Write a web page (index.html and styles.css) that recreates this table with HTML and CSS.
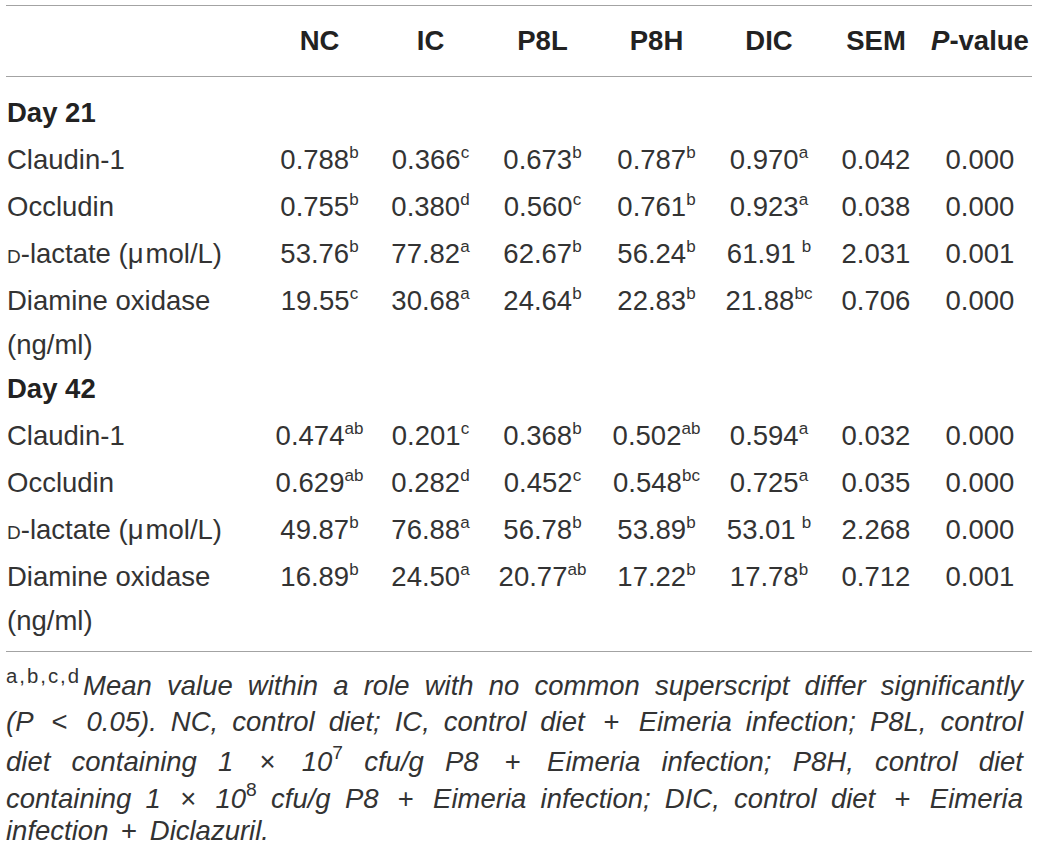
FILE: index.html
```html
<!DOCTYPE html>
<html lang="en">
<head>
    <meta charset="UTF-8">
    <meta name="viewport" content="width=device-width, initial-scale=1.0">
    <title>Intestinal barrier markers</title>
    <link rel="stylesheet" href="styles.css">
</head>
<body>
    <div class="table-wrap">
        <table class="data-table">
            <colgroup>
                <col class="col-label">
                <col class="col-nc">
                <col class="col-ic">
                <col class="col-p8l">
                <col class="col-p8h">
                <col class="col-dic">
                <col class="col-sem">
                <col class="col-p">
            </colgroup>
            <thead>
                <tr>
                    <th></th>
                    <th>NC</th>
                    <th>IC</th>
                    <th>P8L</th>
                    <th>P8H</th>
                    <th>DIC</th>
                    <th>SEM</th>
                    <th><i>P</i>-value</th>
                </tr>
            </thead>
            <tbody>
                <!-- Day 21 -->
                <tr class="group-row">
                    <td colspan="8">Day 21</td>
                </tr>
                <tr>
                    <td>Claudin-1</td>
                    <td>0.788<sup>b</sup></td>
                    <td>0.366<sup>c</sup></td>
                    <td>0.673<sup>b</sup></td>
                    <td>0.787<sup>b</sup></td>
                    <td>0.970<sup>a</sup></td>
                    <td>0.042</td>
                    <td>0.000</td>
                </tr>
                <tr>
                    <td>Occludin</td>
                    <td>0.755<sup>b</sup></td>
                    <td>0.380<sup>d</sup></td>
                    <td>0.560<sup>c</sup></td>
                    <td>0.761<sup>b</sup></td>
                    <td>0.923<sup>a</sup></td>
                    <td>0.038</td>
                    <td>0.000</td>
                </tr>
                <tr>
                    <td><span class="sc">d</span>-lactate (<span class="mu">μ</span>mol/L)</td>
                    <td>53.76<sup>b</sup></td>
                    <td>77.82<sup>a</sup></td>
                    <td>62.67<sup>b</sup></td>
                    <td>56.24<sup>b</sup></td>
                    <td>61.91<sup class="gap">b</sup></td>
                    <td>2.031</td>
                    <td>0.001</td>
                </tr>
                <tr>
                    <td>Diamine oxidase (ng/ml)</td>
                    <td>19.55<sup>c</sup></td>
                    <td>30.68<sup>a</sup></td>
                    <td>24.64<sup>b</sup></td>
                    <td>22.83<sup>b</sup></td>
                    <td>21.88<sup>bc</sup></td>
                    <td>0.706</td>
                    <td>0.000</td>
                </tr>

                <!-- Day 42 -->
                <tr class="group-row">
                    <td colspan="8">Day 42</td>
                </tr>
                <tr>
                    <td>Claudin-1</td>
                    <td>0.474<sup>ab</sup></td>
                    <td>0.201<sup>c</sup></td>
                    <td>0.368<sup>b</sup></td>
                    <td>0.502<sup>ab</sup></td>
                    <td>0.594<sup>a</sup></td>
                    <td>0.032</td>
                    <td>0.000</td>
                </tr>
                <tr>
                    <td>Occludin</td>
                    <td>0.629<sup>ab</sup></td>
                    <td>0.282<sup>d</sup></td>
                    <td>0.452<sup>c</sup></td>
                    <td>0.548<sup>bc</sup></td>
                    <td>0.725<sup>a</sup></td>
                    <td>0.035</td>
                    <td>0.000</td>
                </tr>
                <tr>
                    <td><span class="sc">d</span>-lactate (<span class="mu">μ</span>mol/L)</td>
                    <td>49.87<sup>b</sup></td>
                    <td>76.88<sup>a</sup></td>
                    <td>56.78<sup>b</sup></td>
                    <td>53.89<sup>b</sup></td>
                    <td>53.01<sup class="gap">b</sup></td>
                    <td>2.268</td>
                    <td>0.000</td>
                </tr>
                <tr>
                    <td>Diamine oxidase (ng/ml)</td>
                    <td>16.89<sup>b</sup></td>
                    <td>24.50<sup>a</sup></td>
                    <td>20.77<sup>ab</sup></td>
                    <td>17.22<sup>b</sup></td>
                    <td>17.78<sup>b</sup></td>
                    <td>0.712</td>
                    <td>0.001</td>
                </tr>
            </tbody>
        </table>

        <p class="footnote">
            <span class="fn-line fn-1"><sup>a,b,c,d</sup><i>Mean value within a role with no common superscript differ significantly</i></span>
            <span class="fn-line fn-2"><i>(P <span class="op">&lt;</span> 0.05). NC, control diet; IC, control diet <span class="op">+</span> Eimeria infection; P8L, control</i></span>
            <span class="fn-line fn-3"><i>diet containing 1 <span class="op">×</span> 10<sup>7</sup> cfu/g P8 <span class="op">+</span> Eimeria infection; P8H, control diet</i></span>
            <span class="fn-line fn-4"><i>containing 1 <span class="op">×</span> 10<sup>8</sup> cfu/g P8 <span class="op">+</span> Eimeria infection; DIC, control diet <span class="op">+</span> Eimeria</i></span>
            <span class="fn-line fn-last"><i>infection <span class="op">+</span> Diclazuril.</i></span>
        </p>
    </div>
</body>
</html>
```

FILE: styles.css
```css
body {
    margin: 0;
    padding: 0;
    background: #fff;
    color: #333;
    font-family: "Liberation Sans", Arial, sans-serif;
}
.table-wrap {
    padding: 5px 9px 0 6px;
}
.data-table {
    width: 1026px;
    table-layout: fixed;
    border-collapse: collapse;
    font-size: 27.5px;
    border-top: 1.5px solid #a3a3a3;
    border-bottom: 1.5px solid #a3a3a3;
}
.col-label { width: 258px; }
.col-nc { width: 111px; }
.col-ic { width: 111px; }
.col-p8l { width: 113px; }
.col-p8h { width: 115px; }
.col-dic { width: 110px; }
.col-sem { width: 104px; }
.col-p { width: 104px; }

.data-table th {
    height: 70px;
    padding: 0;
    font-weight: bold;
    text-align: center;
    vertical-align: middle;
    border-bottom: 1.5px solid #a3a3a3;
    color: #222;
    white-space: nowrap;
}
.data-table td {
    padding: 1.5px 0;
    line-height: 44px;
    text-align: center;
    vertical-align: top;
    white-space: nowrap;
}
.data-table td:first-child {
    text-align: left;
    padding-left: 1px;
    white-space: normal;
}
.group-row td {
    font-weight: bold;
    color: #222;
    line-height: 40px;
    padding: 0 0 4px 1px;
}
.data-table tbody tr:first-child td {
    padding-top: 15.5px;
}
.data-table tbody tr:last-child td {
    padding-bottom: 8px;
}
.data-table sup {
    font-size: 0.62em;
    line-height: 0;
    vertical-align: 0.66em;
}
.data-table sup.gap {
    margin-left: 6px;
}
.sc {
    font-variant: small-caps;
}
.mu {
    margin-right: 2px;
}

.footnote {
    margin: 18px 9px 0 0;
    font-size: 27.5px;
    line-height: 32px;
}
.fn-line {
    display: block;
    text-align: justify;
    text-align-last: justify;
}
.fn-line.fn-last {
    text-align-last: left;
}
.footnote sup {
    font-style: normal;
    font-size: 0.7em;
    vertical-align: 0.6em;
    line-height: 0;
}
.fn-1 sup {
    font-size: 0.74em;
    letter-spacing: 2px;
    margin-right: 2px;
}
.fn-2 {
    margin-top: 4px;
}
.fn-3 {
    margin-top: 8px;
}
.fn-4 {
    margin-top: 5px;
}
.op {
    font-style: normal;
    margin: 0 5px;
}
```
